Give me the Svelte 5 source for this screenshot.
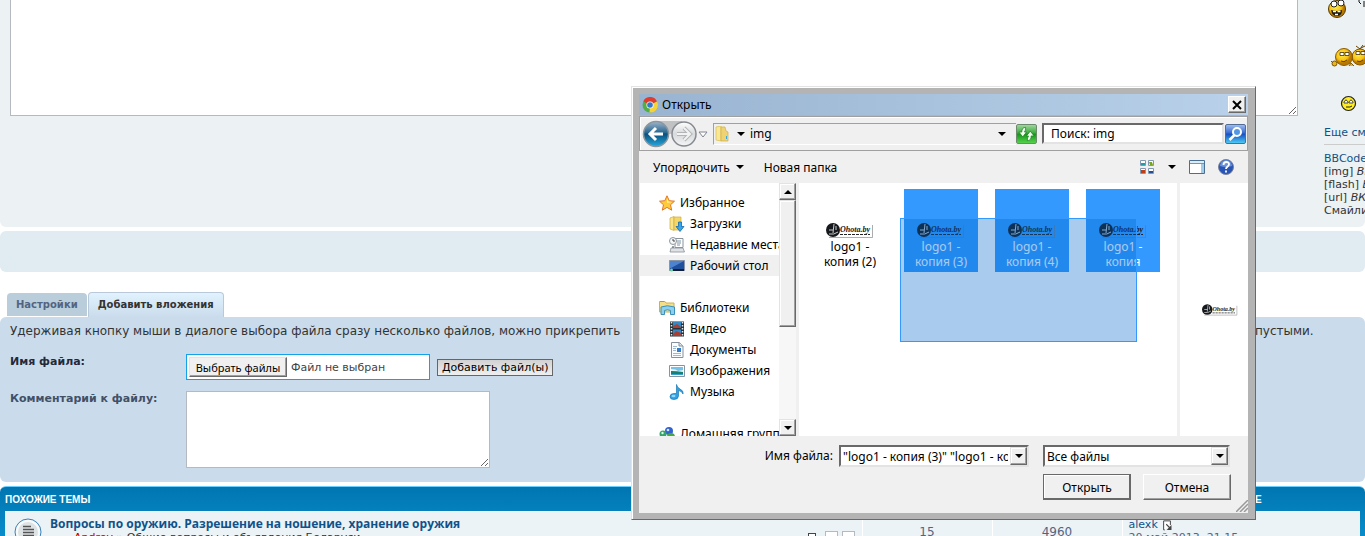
<script lang="ts">
  const libraryItems = [
    { icon: 'video', label: 'Видео' },
    { icon: 'docs', label: 'Документы' },
    { icon: 'pictures', label: 'Изображения' },
    { icon: 'music', label: 'Музыка' }
  ];

  const favoriteItems = [
    { icon: 'downloads', label: 'Загрузки' },
    { icon: 'recent', label: 'Недавние места' },
    { icon: 'desktop', label: 'Рабочий стол', current: true }
  ];

  const files = [
    { lines: ['logo1 -', 'копия (2)'], selected: false },
    { lines: ['logo1 -', 'копия (3)'], selected: true },
    { lines: ['logo1 -', 'копия (4)'], selected: true },
    { lines: ['logo1 -', 'копия'], selected: true }
  ];

  const bbcodes = [
    { tag: '[img]', state: 'ВКЛ' },
    { tag: '[flash]', state: 'ВЫКЛ' },
    { tag: '[url]', state: 'ВКЛ' }
  ];

  let message = $state('');
  let comment = $state('');
  let fileName = $state('"logo1 - копия (3)" "logo1 - копия (4)" "logo1 - копия"');
  let search = $state('Поиск: img');
</script>

{#snippet thumb()}
  <svg class="thumb" viewBox="0 0 48 16" aria-hidden="true">
    <circle cx="7" cy="8" r="7" fill="#15181c" />
    <path d="M8 2l-1 9M3 8h4M3 12q5 1 9-2M10 4v4" stroke="#ccc" fill="none" />
    <text x="14" y="10">Ohota.by</text>
    <path d="M14 12.500h30" stroke="#222" stroke-dasharray="3 1" />
    <path d="M3 15.500h43.500V3" stroke="#777" fill="none" opacity=".6" />
  </svg>
{/snippet}

{#snippet icon(name: string)}
  <svg class="icon" viewBox="0 0 16 16" aria-hidden="true">
    {#if name === 'star'}
      <path d="M8 .8l2.200 4.900 5.300.5-4 3.600 1.200 5.400L8 12.400l-4.700 2.800 1.200-5.400-4-3.600 5.300-.5z" fill="#ffc93c" stroke="#e0762a" />
      <path d="M8 3l1.500 3.600 3.500.5-5 1z" fill="#fff0a0" />
    {:else if name === 'downloads'}
      <path d="M1 2l4-1.500v14L1 13z" fill="#f8e58d" stroke="#d0ab3d" stroke-width=".7" />
      <path d="M5 1h7v13H5z" fill="#f3d768" stroke="#d0ab3d" stroke-width=".7" />
      <path d="M9.500 6h3v4.500H15l-4 5-4-5h2.500z" fill="#36a5ec" stroke="#1669ad" stroke-width=".8" />
    {:else if name === 'recent'}
      <path d="M6 1.500h8v9H6z" fill="#fff" stroke="#8b949c" />
      <path d="M8 4h4M8 6h4M8 8h3" stroke="#7894ad" />
      <path d="M2 11h12l1.500 4H1z" fill="#dfe3e6" stroke="#899199" stroke-width=".8" />
      <circle cx="4" cy="4" r="3.500" fill="#f5f7f8" stroke="#8d979f" />
      <path d="M4 2v2h2M4 9v2" stroke="#444" fill="none" />
    {:else if name === 'desktop'}
      <path d="M.5 2.500h15v10H.5z" fill="#204f9e" stroke="#8a96a8" />
      <path d="M1 3h14L2 10H1z" fill="#4d83cf" />
      <path d="M1 12h14" stroke="#111e38" stroke-width="2" />
      <circle cx="2.500" cy="12" r="1.500" fill="#70d3a4" />
    {:else if name === 'libraries'}
      <path d="M.5 3V1.500H6L7 3h8v9H.5z" fill="#f5df86" stroke="#ceb04d" />
      <path d="M1 1.500h4" stroke="#65b65c" />
      <path d="M2 14.500V7q6-2.500 13.500 0v7.500h-4v-4q-3-1.500-6 0v4z" fill="#8bd0ef" stroke="#3b91bb" />
    {:else if name === 'video'}
      <path d="M1 .5h14v15H1z" fill="#26323a" />
      <path d="M4 1h8v6H4zM4 8.500h8V15H4z" fill="#3388c5" />
      <path d="M4 5l4-2 4 3v1H4zM4 13l3-3 5 2v3H4z" fill="#a93e32" />
      <path d="M2.500 1v15M13.500 1v15" stroke="#e2e8eb" stroke-width="1.500" stroke-dasharray="1.500 1.500" />
    {:else if name === 'docs'}
      <path d="M2.500.5h8l3.500 3.500v11.500H2.500z" fill="#fafdff" stroke="#85909b" />
      <path d="M10 .5V4h4" fill="#dce5eb" stroke="#85909b" />
      <path d="M4 4.500h4M4 6.500h3M4 8.500h3M4 11.500h8M4 13.500h8" stroke="#9fb9cf" />
      <path d="M8 6h4v4H8z" fill="#337dcc" />
    {:else if name === 'pictures'}
      <path d="M.5 2.500h15v11H.5z" fill="#fff" stroke="#87949d" />
      <path d="M2 4h12v8H2z" fill="#75c2e8" />
      <path d="M2 6q5 0 7 2l5-1v5H2z" fill="#e4f5f4" />
      <path d="M2 8q6 0 12 1v3H2z" fill="#197f6e" />
      <path d="M2 11h12v1H2z" fill="#3b9fd0" />
    {:else if name === 'music'}
      <path d="M7.500.5q.5 3 3.500 4.500 4 2 3 5-1-3-4.500-3.500V12q-.3 3.500-4.500 3.500-4 0-4-2.700Q1 9.500 5 9.500h2.500z" fill="#329fe0" stroke="#1878b4" stroke-width=".7" />
      <ellipse cx="4.500" cy="12" rx="2" ry="1.200" fill="#8bd5ff" />
    {:else if name === 'homegroup'}
      <circle cx="10" cy="5" r="4" fill="#3262cf" />
      <circle cx="4" cy="8" r="3.500" fill="#36a26c" />
      <circle cx="12" cy="11" r="4" fill="#46a844" />
      <circle cx="9" cy="4" r="1.300" fill="#d4e6ff" />
      <circle cx="3.500" cy="7" r="1.200" fill="#d5ffe3" />
    {:else if name === 'chrome'}
      <circle cx="8" cy="8" r="7.500" fill="#54ad45" />
      <path d="M8 8L1.300 4.300A7.500 7.500 0 0 1 15 4.500z" fill="#df3b2f" />
      <path d="M8 8l7-3.500A7.500 7.500 0 0 1 7.500 15.500z" fill="#f4d43a" />
      <circle cx="8" cy="8" r="3.600" fill="#f5f5f5" />
      <circle cx="8" cy="8" r="2.800" fill="#3777c8" />
    {:else if name === 'folder'}
      <path d="M2 1l5-1v15l-5-1z" fill="#f8e795" stroke="#d8bd55" stroke-width=".7" />
      <path d="M7 1h4l1 4 2 1v9H7z" fill="#efd372" stroke="#d1ae49" stroke-width=".7" />
      <path d="M12.500 10v3" stroke="#3ba7d8" />
    {:else if name === 'views'}
      <path d="M1.500 1.500h5v5h-5zM9.500 1.500h5v5h-5zM1.500 9.500h5v5h-5zM9.500 9.500h5v5h-5z" fill="#fff" stroke="#8198b2" />
      <path d="M2 4h4v2H2z" fill="#249ba7" />
      <path d="M10 3h3l1 3h-3z" fill="#77a51d" />
      <path d="M2 11h4v3H2z" fill="#bd3e17" />
      <path d="M10 12h4v2h-4z" fill="#234f91" />
    {:else if name === 'preview'}
      <path d="M.5 1.500h15v13H.5z" fill="#fff" stroke="#496f94" />
      <path d="M1 2h14v2H1z" fill="#dcecf6" />
      <path d="M12 4h3v10h-3z" fill="#a2cce6" />
      <path d="M1 4.500h14" stroke="#7793ad" />
    {:else if name === 'page'}
      <path d="M5 14.500H3.500v-12h9V8" fill="#fff" stroke="#444" stroke-width="1.300" />
      <path d="M14 8v6.500H7.500z" fill="#444" />
      <path d="M7 7l5 5" stroke="#444" stroke-width="1.500" />
    {/if}
  </svg>
{/snippet}

{#snippet treeItem(name: string, label: string, current = false)}
  <li class="tree-item" class:current>{@render icon(name)}<span>{label}</span></li>
{/snippet}

<main class="page">
  <section class="editor">
    <textarea class="message" aria-label="Сообщение" bind:value={message}></textarea>
    <aside class="smilies">
      <svg class="faces" viewBox="0 0 41 122" aria-label="Смайлики">
        <defs>
          <radialGradient id="face" cx="40%" cy="35%"><stop offset="0" stop-color="#fff04a" /><stop offset=".7" stop-color="#f8c014" /><stop offset="1" stop-color="#b87800" /></radialGradient>
        </defs>
        <circle cx="13" cy="9" r="8.500" fill="url(#face)" stroke="#573900" />
        <circle cx="10" cy="4" r="3" fill="#fff" stroke="#222" />
        <circle cx="17" cy="3" r="3" fill="#fff" stroke="#222" />
        <path d="M7 10q6 2 11 0 0 6-5 6t-6-6" fill="#201b10" />
        <path d="M9 11.500h3M13.500 11.500h3M11 14.500h3" stroke="#fff" stroke-width="1.500" fill="none" />
        <path d="M35 0v2l2 2M40 1v6" stroke="#111" fill="none" />
        <circle cx="36" cy="57" r="8" fill="url(#face)" stroke="#8a5a00" />
        <circle cx="20" cy="57" r="8.500" fill="url(#face)" stroke="#8a5a00" />
        <path d="M16 52.500h4v3h-4zM21 52.500h4v3h-4zM32 51.500h4v3h-4zM37 51.500h4v3h-4z" fill="#fff" stroke="#402d0a" stroke-width=".8" />
        <path d="M17 61q3 2 6-1M33 61q3 2 6-1M32 46l4 3 3-4M37 48l4-2" stroke="#693f00" fill="none" />
        <circle cx="10.500" cy="63.500" r="2.500" fill="#e9b717" stroke="#835600" />
        <path d="M7 61l2 2M25 66l2-3 3 3" fill="#e9b717" stroke="#835600" />
        <circle cx="24.500" cy="103.500" r="7" fill="#ffed20" stroke="#222" stroke-width="1.200" />
        <path d="M20 102q2-4 4 0v1h-4zM25 102q2-4 4 0v1h-4z" fill="#fff" stroke="#222" stroke-width=".8" />
        <path d="M22 107h4l2-1" stroke="#222" fill="none" />
      </svg>
      <a class="more" href="#smilies">Еще смайлики…</a>
      <hr />
      <div class="codes">
        <div><a href="#bbcode">BBCode</a> <em>ВКЛ</em></div>
        {#each bbcodes as code (code.tag)}
          <div>{code.tag} <em>{code.state}</em></div>
        {/each}
        <div>Смайлики <em>ВКЛ</em></div>
      </div>
    </aside>
  </section>

  <section class="spacer"></section>

  <nav class="tabs">
    <a href="#options">Настройки</a>
    <a class="active" href="#attach">Добавить вложения</a>
  </nav>

  <section class="attach">
    <p class="hint">
      <span>Удерживая кнопку мыши в диалоге выбора файла сразу несколько файлов, можно прикрепить</span>
      <span class="hint-end">пустыми.</span>
    </p>
    <div class="field">
      <label class="strong" for="attach-file">Имя файла:</label>
      <div class="file-box">
        <button id="attach-file" type="button">Выбрать файлы</button>
        <span>Файл не выбран</span>
      </div>
      <button class="add" type="button">Добавить файл(ы)</button>
    </div>
    <div class="field comment-field">
      <label for="attach-comment">Комментарий к файлу:</label>
      <textarea id="attach-comment" bind:value={comment}></textarea>
    </div>
  </section>

  <section class="topics">
    <table>
      <colgroup>
        <col class="col-status" />
        <col />
        <col class="col-count" />
        <col class="col-count" />
        <col class="col-last" />
      </colgroup>
      <thead>
        <tr>
          <th colspan="2">Похожие темы</th>
          <th></th>
          <th></th>
          <th><span class="last-head">Последнее сообщение</span></th>
        </tr>
      </thead>
      <tbody>
        <tr>
          <td class="status">
            <svg viewBox="0 0 28 28" aria-hidden="true">
              <circle cx="14" cy="14" r="13" fill="#f7fafb" stroke="#397fb8" />
              <circle cx="14" cy="14" r="10" fill="#dde2e5" />
              <path d="M9 8.500h8M9 11.500h11M9 14.500h11M9 17.500h11M9 20.500h11" stroke="#555" stroke-width="1.500" />
            </svg>
          </td>
          <td class="topic">
            <a href="#topic">Вопросы по оружию. Разрешение на ношение, хранение оружия</a>
            <div class="byline">
              <span><b>Andrey</b> » Общие вопросы и объявления Беларуси</span>
              <span class="pages"><i class="goto"></i><i></i><i></i></span>
            </div>
          </td>
          <td class="count">15</td>
          <td class="count">4960</td>
          <td class="last"><a href="#user">alexk</a> {@render icon('page')}<div>20 май 2013, 21:15</div></td>
        </tr>
      </tbody>
    </table>
  </section>
</main>

<div class="dialog" role="dialog" aria-labelledby="dialog-title">
  <header class="titlebar">
    {@render icon('chrome')}
    <span id="dialog-title">Открыть</span>
    <button type="button" class="close" aria-label="Закрыть">
      <svg viewBox="0 0 10 10"><path d="M1 1l8 8M9 1L1 9" stroke="#000" stroke-width="2" /></svg>
    </button>
  </header>

  <div class="navbar">
    <svg class="travel" viewBox="0 0 68 30" aria-hidden="true">
      <defs>
        <linearGradient id="back" x2="0" y2="1"><stop offset="0" stop-color="#9db6ca" /><stop offset=".45" stop-color="#286690" /><stop offset=".5" stop-color="#07507e" /><stop offset="1" stop-color="#27a9df" /></linearGradient>
        <linearGradient id="next" x2="0" y2="1"><stop offset="0" stop-color="#fff" /><stop offset=".5" stop-color="#d7d9db" /><stop offset="1" stop-color="#f5f6f6" /></linearGradient>
      </defs>
      <path d="M14 2h27v10q-12 6-27 0z" fill="#bfc1c3" />
      <circle cx="15" cy="15" r="12.500" fill="url(#back)" stroke="#8a959e" stroke-width="1.500" />
      <circle cx="43" cy="15" r="12" fill="url(#next)" stroke="#858a90" stroke-width="1.500" />
      <path d="M22 15H9M15 9l-6 6 6 6" stroke="#fff" stroke-width="3" fill="none" />
      <path d="M36 15h13M43 9l6 6-6 6" stroke="#b2b5b8" stroke-width="4" fill="none" />
      <path d="M36 15h13M43 9l6 6-6 6" stroke="#f2f3f3" stroke-width="2" fill="none" />
      <path d="M58 13h8l-4 5z" fill="#fff" stroke="#7e8491" />
    </svg>
    <div class="address">
      {@render icon('folder')}
      <i class="arrow"></i>
      <span>img</span>
      <i class="arrow history"></i>
    </div>
    <button type="button" class="refresh" aria-label="Обновить">
      <svg viewBox="0 0 18 16"><path d="M8 1Q4 1 4 6H1l4 5 4-5H7q0-2 1-2zM10 15q4 0 4-5h3l-4-5-4 5h2q0 2-1 2z" fill="#f1fff0" stroke="#15751a" stroke-width=".7" /></svg>
    </button>
    <input class="search" type="text" aria-label="Поиск" bind:value={search} />
    <button type="button" class="go" aria-label="Найти">
      <svg viewBox="0 0 16 16"><circle cx="9.500" cy="6" r="4" fill="#5497e4" stroke="#fff" stroke-width="2" /><path d="M7 9l-5 5" stroke="#fff" stroke-width="2.500" /></svg>
    </button>
  </div>

  <div class="toolbar">
    <button type="button">Упорядочить <i class="arrow"></i></button>
    <button type="button">Новая папка</button>
    <div class="tools">
      {@render icon('views')}
      <i class="arrow"></i>
      {@render icon('preview')}
      <svg class="icon help" viewBox="0 0 16 16" aria-hidden="true">
        <circle cx="8" cy="8" r="7.500" fill="#2754b5" stroke="#7b8399" />
        <path d="M2 7a6 6 0 0 1 12 0Q8 9 2 7" fill="#6993dd" />
        <path d="M5.500 6q0-3 2.800-3T11 5.500C11 7.500 8 7.500 8 10M8 11.500v2" stroke="#fff" stroke-width="1.800" fill="none" />
      </svg>
    </div>
  </div>

  <div class="browser">
    <div class="tree">
      <ul>
        {@render treeItem('star', 'Избранное')}
        <li>
          <ul class="nested">
            {#each favoriteItems as item (item.label)}
              {@render treeItem(item.icon, item.label, item.current)}
            {/each}
          </ul>
        </li>
      </ul>
      <ul>
        {@render treeItem('libraries', 'Библиотеки')}
        <li>
          <ul class="nested">
            {#each libraryItems as item (item.label)}
              {@render treeItem(item.icon, item.label)}
            {/each}
          </ul>
        </li>
      </ul>
      <ul>
        {@render treeItem('homegroup', 'Домашняя группа')}
      </ul>
    </div>
    <div class="scrollbar">
      <button type="button" aria-label="Вверх"><i class="arrow up"></i></button>
      <div class="scroll-thumb"></div>
      <button type="button" aria-label="Вниз"><i class="arrow"></i></button>
    </div>
    <div class="files">
      {#each files as file (file.lines[1])}
        <div class="file" class:selected={file.selected}>
          {@render thumb()}
          {#each file.lines as line}
            <span>{line}</span>
          {/each}
        </div>
      {/each}
      <!-- рамка выделения поверх файлов -->
      <div class="marquee"></div>
    </div>
    <div class="preview">{@render thumb()}</div>
  </div>

  <footer class="footer">
    <label for="file-name">Имя файла:</label>
    <div class="combo name">
      <input id="file-name" type="text" bind:value={fileName} />
      <button type="button" aria-label="Список файлов"><i class="arrow"></i></button>
    </div>
    <div class="combo">
      <select aria-label="Тип файлов">
        <option>Все файлы</option>
      </select>
      <span class="drop"><i class="arrow"></i></span>
    </div>
    <div class="actions">
      <button type="button" class="primary">Открыть</button>
      <button type="button">Отмена</button>
    </div>
    <svg class="grip" viewBox="0 0 12 12" aria-hidden="true">
      <path d="M0 12L12 0M4 12l8-8M8 12l4-4" stroke="#999" stroke-width="1.500" />
    </svg>
  </footer>
</div>

<style>
  :global(html) {
    overflow: hidden;
  }

  :global(body) {
    background: #fff;
    overflow: hidden;
    height: 100vh;
  }

  * {
    box-sizing: border-box;
  }

  button,
  input,
  select,
  textarea {
    font: inherit;
    color: inherit;
    margin: 0;
    border-radius: 0;
    outline: 0;
  }

  a {
    color: #105289;
    text-decoration: none;
  }

  ul {
    list-style: none;
    margin: 0;
    padding: 0;
  }

  .page {
    font: 11px/13px Verdana, 'DejaVu Sans', sans-serif;
    color: #333;
  }

  .editor {
    display: flex;
    height: 227px;
    background: #ecf1f3;
    border-radius: 0 0 6px 6px;
    padding-left: 10px;
  }

  .message {
    flex: 1;
    height: 116px;
    border: 1px solid #b4bac0;
    border-top: 0;
    background: #fff;
  }

  .smilies {
    width: 41px;
    margin-left: 26px;
    white-space: nowrap;
    overflow: hidden;
    font-size: 11px;
  }

  .faces {
    display: block;
    width: 41px;
    height: 122px;
  }

  .more {
    display: block;
    line-height: 22px;
  }

  .smilies hr {
    border: 0;
    border-top: 1px solid #ccc;
    margin: 0 0 7px;
  }

  .spacer {
    height: 41px;
    margin-top: 4px;
    background: #e1ebf2;
    border-radius: 6px;
  }

  .tabs {
    display: flex;
    align-items: flex-end;
    height: 45px;
    padding-left: 7px;
    gap: 1px;
    font-weight: bold;
    font-size: 10px;
  }

  .tabs a {
    padding: 0 9px;
    margin-bottom: 1px;
    height: 23px;
    line-height: 23px;
    background: #bacddb;
    color: #536482;
    border-radius: 4px 4px 0 0;
  }

  .tabs .active {
    height: 25px;
    margin-bottom: 0;
    border: 1px solid #b9c9d9;
    border-width: 1px 1px 0;
    line-height: 24px;
    background: linear-gradient(#e2f2ff, #cadceb);
    color: #333;
  }

  .attach {
    height: 165px;
    background: #cadceb;
    border-radius: 6px;
    padding: 6px 10px;
  }

  .hint {
    display: flex;
    justify-content: space-between;
    margin: 0;
    font-size: 12px;
    line-height: 16px;
    white-space: nowrap;
  }

  .hint-end {
    width: 100px;
  }

  .field {
    display: flex;
    align-items: flex-start;
    margin-top: 15px;
  }

  .comment-field {
    margin-top: 11px;
  }

  .field label {
    width: 176px;
    font-weight: bold;
    line-height: 15px;
    color: #425067;
  }

  .field .strong {
    color: #23293a;
  }

  .file-box {
    display: flex;
    align-items: center;
    gap: 4px;
    width: 244px;
    height: 26px;
    border: 1px solid #11a3ea;
    background: #fff;
    padding: 0 2px;
    color: #444;
  }

  .file-box button {
    width: 98px;
    height: 20px;
    padding: 0;
    border: 1px solid;
    border-color: #e3e3e3 #696969 #696969 #e3e3e3;
    box-shadow: inset -1px -1px #a0a0a0;
    background: #f0f0f0;
    color: #000;
    font: 11px 'Noto Sans', sans-serif;
  }

  .add {
    height: 17px;
    margin: 5px 0 0 7px;
    padding: 0 4px;
    border: 1px solid #666;
    background: linear-gradient(#d2d2d2, #efefef);
    color: #000;
    line-height: 15px;
  }

  #attach-comment {
    width: 304px;
    height: 77px;
    border: 1px solid #b4bac0;
    background: #fff;
  }

  .topics {
    margin-top: 4px;
    padding: 0 5px;
    background: linear-gradient(#0076b1, #0a90d0 60px);
    border-top: 1px solid #6aceff;
    border-radius: 6px 6px 0 0;
  }

  .topics table {
    width: 100%;
    table-layout: fixed;
    border-collapse: collapse;
  }

  .col-status {
    width: 45px;
  }

  .col-count {
    width: 130px;
  }

  .col-last {
    width: 238px;
  }

  .topics th {
    height: 24px;
    padding: 2px 0 0;
    color: #fff;
    font: bold 10px 'Liberation Sans', Arial, sans-serif;
    text-transform: uppercase;
    text-align: left;
  }

  .last-head {
    margin-left: 6px;
    white-space: nowrap;
  }

  .topics td {
    height: 40px;
    padding: 0 4px;
    background: #ecf3f7;
    border-top: 1px solid #fff;
    border-left: 1px solid #fff;
    vertical-align: top;
  }

  .topics td.status {
    padding: 6px 9px;
    border-left: 0;
  }

  .status svg {
    display: block;
    width: 28px;
    height: 28px;
  }

  .topics td.topic {
    border-left: 0;
    padding: 4px 0;
    white-space: nowrap;
  }

  .topic a {
    display: block;
    font: bold 12px/15px 'Open Sans', 'Trebuchet MS', sans-serif;
  }

  .byline {
    display: flex;
    justify-content: space-between;
    padding: 0 7px 0 24px;
  }

  .byline b {
    color: #a00;
    font-weight: normal;
  }

  .pages {
    display: flex;
    gap: 4px;
  }

  .pages i {
    width: 13px;
    height: 12px;
    border: 1px solid #b4bac0;
    background: #fff;
  }

  .pages .goto {
    width: 8px;
    margin: 2px 5px 0 0;
    border-color: #444;
  }

  .topics td.count {
    text-align: center;
    padding-top: 14px;
    font-size: 12px;
    color: #536482;
  }

  .topics td.last {
    padding: 6px 0 0 6px;
    color: #536482;
  }

  .last .icon {
    width: 12px;
    height: 12px;
    vertical-align: middle;
  }

  .icon {
    flex: none;
    width: 16px;
    height: 16px;
  }

  .arrow {
    flex: none;
    display: inline-block;
    width: 0;
    height: 0;
    border: 4px solid transparent;
    border-top-color: #000;
    border-bottom: 0;
  }

  .arrow.up {
    border-top: 0;
    border-bottom: 4px solid #000;
  }

  /* Окно выбора файлов лежит поверх страницы */
  .dialog {
    position: absolute;
    top: 86px;
    left: 631px;
    width: 625px;
    border: 1px solid;
    border-color: #e3e3e3 #696969 #696969 #e3e3e3;
    box-shadow: inset 1px 1px #fff;
    background: #b4b4b4;
    padding: 7px 7px 6px;
    font: 12px/15px 'Noto Sans', 'Segoe UI', sans-serif;
    color: #000;
  }

  .titlebar {
    display: flex;
    align-items: center;
    gap: 4px;
    height: 21px;
    padding: 0 2px 0 3px;
    background: linear-gradient(90deg, #99b4d1, #b9d1ea);
  }

  .close {
    display: flex;
    align-items: center;
    justify-content: center;
    width: 18px;
    height: 17px;
    margin-left: auto;
    padding: 0;
    border: 1px solid;
    border-color: #fff #696969 #696969 #fff;
    box-shadow: inset -1px -1px #a0a0a0;
    background: #f0f0f0;
  }

  .close svg {
    width: 10px;
    height: 10px;
  }

  .navbar {
    display: flex;
    align-items: center;
    height: 35px;
    margin-top: 1px;
    background: #f0f0f0;
    border: 1px solid #a0a0a0;
    box-shadow: inset 1px 1px #fff;
    padding: 0 1px;
  }

  .travel {
    flex: none;
    width: 68px;
    height: 30px;
  }

  .address {
    display: flex;
    align-items: center;
    gap: 5px;
    width: 303px;
    height: 22px;
    margin-left: 4px;
    border: 1px solid #a0a0a0;
    border-right: 0;
    border-bottom-color: #fff;
  }

  .address .arrow {
    margin-left: 2px;
  }

  .address .history {
    margin-left: auto;
    margin-right: 10px;
  }

  .refresh,
  .go {
    flex: none;
    width: 21px;
    height: 20px;
    padding: 1px;
    border: 1px solid #6c8b6c;
    border-radius: 2px;
    background: linear-gradient(#9fd69c, #38ac3b 45%, #149619 50%, #56d14c);
  }

  .refresh svg,
  .go svg {
    display: block;
    width: 17px;
    height: 16px;
  }

  .go {
    border-color: #536c93;
    background: linear-gradient(#9ebbef, #3669d0 45%, #174ec1 50%, #4bcaf5);
  }

  .search {
    flex: 1;
    min-width: 0;
    height: 21px;
    margin: 0 1px 0 5px;
    padding: 0 7px;
    border: 2px solid;
    border-color: #696969 #e3e3e3 #e3e3e3 #696969;
    background: #fff;
  }

  .toolbar {
    display: flex;
    align-items: center;
    height: 32px;
    padding: 0 14px;
    gap: 20px;
    background: #f0f0f0;
  }

  .toolbar button {
    display: flex;
    align-items: center;
    gap: 6px;
    border: 0;
    padding: 0;
    background: none;
  }

  .tools {
    display: flex;
    align-items: center;
    gap: 13px;
    margin-left: auto;
  }

  .browser {
    display: flex;
    height: 253px;
    background: #fff;
    border-left: 1px solid #f0f0f0;
  }

  .tree {
    width: 139px;
    padding-top: 9px;
    overflow: hidden;
    white-space: nowrap;
  }

  .tree > ul {
    margin-bottom: 21px;
  }

  .tree-item {
    display: flex;
    align-items: center;
    gap: 5px;
    height: 21px;
    padding-left: 19px;
  }

  .nested .tree-item {
    padding-left: 29px;
  }

  .tree-item.current {
    background: #f0f0f0;
  }

  .scrollbar {
    display: flex;
    flex-direction: column;
    width: 17px;
    background: #f7f7f7;
  }

  .scrollbar button,
  .scroll-thumb,
  .combo button,
  .drop {
    display: flex;
    align-items: center;
    justify-content: center;
    padding: 0;
    border: 1px solid;
    border-color: #e3e3e3 #696969 #696969 #e3e3e3;
    box-shadow: inset -1px -1px #a0a0a0, inset 1px 1px #fff;
    background: #f0f0f0;
  }

  .scrollbar button {
    height: 17px;
  }

  .scrollbar button:last-child {
    margin-top: auto;
  }

  .scroll-thumb {
    height: 127px;
  }

  .files {
    position: relative;
    flex: 1;
    display: flex;
    align-items: flex-start;
    gap: 17px;
    padding: 6px 0 0 14px;
    border-left: 3px solid #f0f0f0;
  }

  .file {
    display: flex;
    flex-direction: column;
    align-items: center;
    width: 74px;
    height: 83px;
    padding-top: 33px;
  }

  .file.selected {
    background: #3399ff;
    color: #fff;
  }

  .thumb {
    width: 48px;
    height: 16px;
    margin-bottom: 1px;
  }

  .thumb text {
    font: italic bold 8px 'Liberation Serif', serif;
    fill: #15181c;
  }

  .marquee {
    position: absolute;
    left: 101px;
    top: 35px;
    width: 237px;
    height: 124px;
    border: 1px solid #3399ff;
    background: rgba(0, 102, 204, 0.34);
  }

  .preview {
    display: flex;
    align-items: center;
    justify-content: center;
    width: 71px;
    border-left: 3px solid #f0f0f0;
  }

  .preview .thumb {
    width: 36px;
    height: 13px;
    margin-left: 12px;
  }

  .footer {
    position: relative;
    display: grid;
    grid-template-columns: 200px 204px 187px;
    row-gap: 7px;
    height: 77px;
    padding-top: 9px;
    align-content: start;
    background: #f0f0f0;
  }

  .footer label {
    padding-right: 6px;
    text-align: right;
    line-height: 22px;
  }

  .combo {
    display: flex;
    height: 22px;
    border: 2px solid;
    border-color: #696969 #e3e3e3 #e3e3e3 #696969;
    background: #fff;
  }

  .combo.name {
    width: 190px;
  }

  .combo input,
  .combo select {
    flex: 1;
    min-width: 0;
    border: 0;
    padding: 0 2px;
    background: #fff;
    appearance: none;
  }

  .combo button,
  .drop {
    flex: none;
    width: 17px;
    height: 18px;
  }

  .drop {
    pointer-events: none;
  }

  .actions {
    grid-column: 3;
    display: flex;
    gap: 12px;
  }

  .actions button {
    flex: none;
    width: 88px;
    height: 26px;
    padding: 0;
    border: 1px solid;
    border-color: #fff #696969 #696969 #fff;
    box-shadow: inset -1px -1px #a0a0a0;
    background: #f0f0f0;
  }

  .actions .primary {
    border-color: #696969;
    box-shadow: inset -1px -1px #696969, inset 1px 1px #fff;
  }

  .grip {
    position: absolute;
    right: 0;
    bottom: 1px;
    width: 12px;
    height: 12px;
  }
</style>
